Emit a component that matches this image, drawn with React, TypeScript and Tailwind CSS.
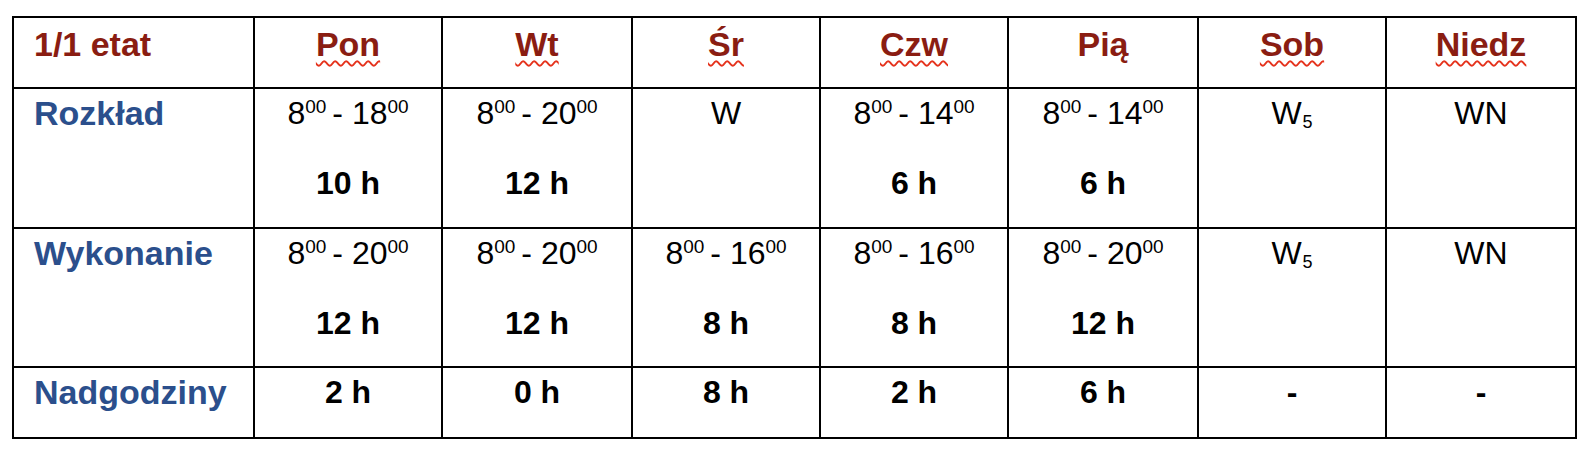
import { ReactNode } from 'react';

type Cell =
  | { kind: 'time'; from: string; to: string; hours: string }
  | { kind: 'text'; text: string; sub?: string }
  | { kind: 'bold'; text: string };

const days = [
  { label: 'Pon', wavy: true },
  { label: 'Wt', wavy: true },
  { label: 'Śr', wavy: true },
  { label: 'Czw', wavy: true },
  { label: 'Pią', wavy: false },
  { label: 'Sob', wavy: true },
  { label: 'Niedz', wavy: true },
];

const rows: { label: string; cells: Cell[] }[] = [
  {
    label: 'Rozkład',
    cells: [
      { kind: 'time', from: '8', to: '18', hours: '10 h' },
      { kind: 'time', from: '8', to: '20', hours: '12 h' },
      { kind: 'text', text: 'W' },
      { kind: 'time', from: '8', to: '14', hours: '6 h' },
      { kind: 'time', from: '8', to: '14', hours: '6 h' },
      { kind: 'text', text: 'W', sub: '5' },
      { kind: 'text', text: 'WN' },
    ],
  },
  {
    label: 'Wykonanie',
    cells: [
      { kind: 'time', from: '8', to: '20', hours: '12 h' },
      { kind: 'time', from: '8', to: '20', hours: '12 h' },
      { kind: 'time', from: '8', to: '16', hours: '8 h' },
      { kind: 'time', from: '8', to: '16', hours: '8 h' },
      { kind: 'time', from: '8', to: '20', hours: '12 h' },
      { kind: 'text', text: 'W', sub: '5' },
      { kind: 'text', text: 'WN' },
    ],
  },
  {
    label: 'Nadgodziny',
    cells: [
      { kind: 'bold', text: '2 h' },
      { kind: 'bold', text: '0 h' },
      { kind: 'bold', text: '8 h' },
      { kind: 'bold', text: '2 h' },
      { kind: 'bold', text: '6 h' },
      { kind: 'bold', text: '-' },
      { kind: 'bold', text: '-' },
    ],
  },
];

function Sup({ children }: { children: ReactNode }) {
  return <sup className="text-[19px] top-[-11px]">{children}</sup>;
}

function DataCell({ cell }: { cell: Cell }) {
  if (cell.kind === 'time') {
    return (
      <div className="flex flex-col items-center bg-white pt-[4px]">
        <div className="text-[32px] leading-[40px]">
          {cell.from}
          <Sup>00</Sup>
          <span className="ml-[6px]">-</span> {cell.to}
          <Sup>00</Sup>
        </div>
        <div className="mt-[30px] text-[32px] font-bold leading-[40px]">{cell.hours}</div>
      </div>
    );
  }
  if (cell.kind === 'bold') {
    return (
      <div className="flex flex-col items-center bg-white pt-[4px]">
        <div className="text-[32px] font-bold leading-[40px]">{cell.text}</div>
      </div>
    );
  }
  return (
    <div className="flex flex-col items-center bg-white pt-[4px]">
      <div className="text-[32px] leading-[40px]">
        {cell.text}
        {cell.sub && <sub className="text-[18px] bottom-[-4px] ml-[1px]">{cell.sub}</sub>}
      </div>
    </div>
  );
}

export default function App() {
  return (
    <div className="min-h-[450px] bg-white pl-[12px] pt-[16px] font-['Liberation_Sans',Arial,sans-serif] text-black">
      <div className="grid w-fit grid-cols-[239px_186px_188px_186px_186px_188px_186px_188px] grid-rows-[69px_138px_137px_69px] gap-[2px] bg-black p-[2px]">
        <div className="bg-white pl-[20px] pt-[6px] text-[34px] font-bold leading-[40px] text-[#8a1d12]">
          1/1 etat
        </div>
        {days.map((d) => (
          <div key={d.label} className="flex flex-col items-center bg-white pt-[6px]">
            <span
              className={
                d.wavy
                  ? 'text-[34px] font-bold leading-[40px] text-[#8a1d12] underline decoration-wavy decoration-[#e5321c] decoration-[1.5px] underline-offset-[4px]'
                  : 'text-[34px] font-bold leading-[40px] text-[#8a1d12]'
              }
            >
              {d.label}
            </span>
          </div>
        ))}
        {rows.map((r) => (
          <>
            <div key={r.label} className="bg-white pl-[20px] pt-[4px] text-[34px] font-bold leading-[40px] text-[#2b4f8c]">
              {r.label}
            </div>
            {r.cells.map((c, i) => (
              <DataCell key={r.label + i} cell={c} />
            ))}
          </>
        ))}
      </div>
    </div>
  );
}
